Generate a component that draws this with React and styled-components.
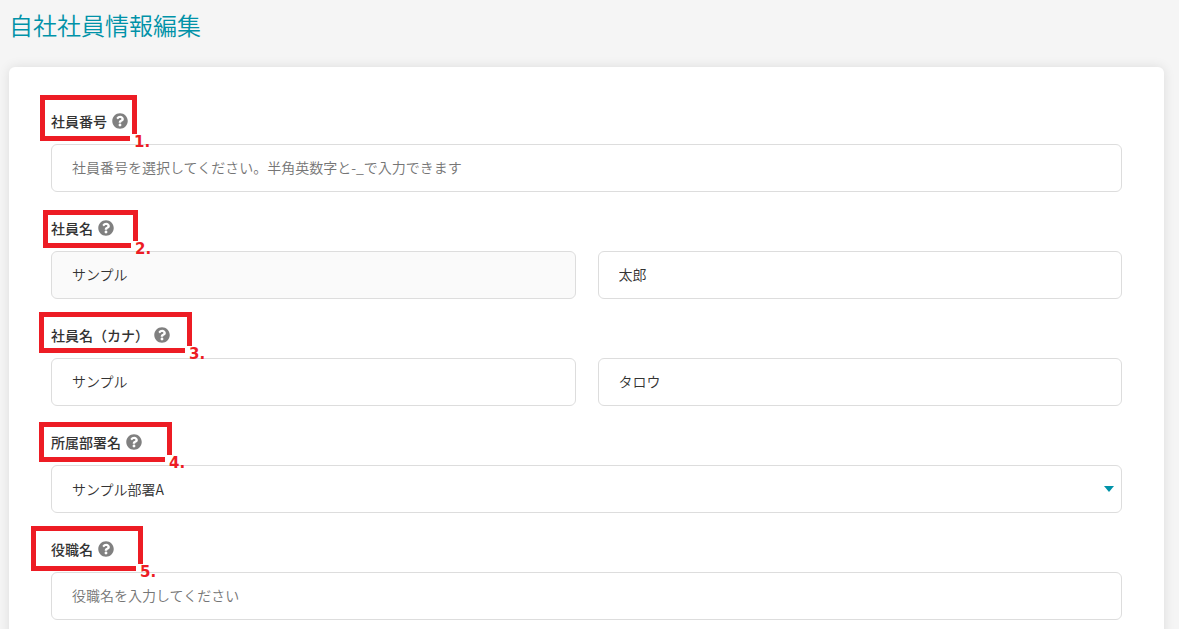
import React from "react";
import styled, { createGlobalStyle } from "styled-components";
import { FaQuestionCircle } from "react-icons/fa";

const GlobalStyle = createGlobalStyle`
  * {
    box-sizing: border-box;
  }
  html {
    scrollbar-width: none;
  }
  body {
    margin: 0;
    background-color: #f5f5f5;
    color: #333333;
    font-family: "Noto Sans CJK JP", sans-serif;
    font-size: 14px;
  }
`;

const Page = styled.main`
  padding: 7px 15px 0 9px;
`;
const PageTitle = styled.h1`
  margin: 0 0 24px;
  color: #0092a8;
  font-size: 24px;
  font-weight: 350;
  line-height: 36px;
`;
const Panel = styled.form`
  padding: 42px;
  background-color: #ffffff;
  border-radius: 6px;
  box-shadow: 0 0 12px rgba(0, 0, 0, 0.1);
  display: flex;
  flex-direction: column;
  gap: 24px;
`;
const FieldWrapper = styled.div`
  display: flex;
  flex-direction: column;
  gap: 11px;
`;
const LabelRow = styled.div`
  position: relative;
  height: 24px;
  display: flex;
  align-items: center;
  gap: 5px;
`;
const FieldLabel = styled.label`
  font-weight: 500;
  line-height: 24px;
`;
const HelpIcon = styled(FaQuestionCircle)`
  width: 16px;
  height: 16px;
  color: #808080;
`;
const Controls = styled.div`
  display: grid;
  grid-template-columns: repeat(${(props) => props.$columns}, 1fr);
  gap: 22px;
`;
const TextInput = styled.input`
  width: 100%;
  height: 48px;
  padding: 0 20px 3px;
  background-color: ${(props) => (props.$shaded ? "#fafafa" : "#ffffff")};
  border: 1px solid #dddddd;
  border-radius: 6px;
  color: #333333;
  font-family: inherit;
  font-size: 14px;
  font-weight: 350;
  &::placeholder {
    color: #757575;
    opacity: 1;
  }
`;
const SelectWrapper = styled.div`
  position: relative;
`;
const Select = styled.select`
  width: 100%;
  height: 48px;
  padding: 0 20px;
  appearance: none;
  background-color: #ffffff;
  border: 1px solid #dddddd;
  border-radius: 6px;
  color: #333333;
  font-family: inherit;
  font-size: 14px;
  font-weight: 350;
`;
const SelectArrow = styled.svg`
  position: absolute;
  top: 21px;
  right: 8px;
  width: 10px;
  height: 6px;
  fill: #0092a8;
  pointer-events: none;
`;

// red frame around a label, its lower right corner is cut away for the number
const Callout = styled.div`
  position: absolute;
  z-index: 1;
  left: ${(props) => props.$left}px;
  top: ${(props) => props.$top}px;
  width: ${(props) => props.$width}px;
  height: ${(props) => props.$height}px;
  border: 5px solid #ed1c24;
  pointer-events: none;
  &::after {
    content: "";
    position: absolute;
    right: -5px;
    bottom: -5px;
    width: 7px;
    height: 7px;
    background-color: #ffffff;
  }
`;
const CalloutNumber = styled.span`
  position: absolute;
  z-index: 1;
  left: calc(100% + 2px);
  top: calc(100% - 2px);
  color: #ed1c24;
  font-family: "DejaVu Sans", sans-serif;
  font-size: 15px;
  font-weight: 700;
  line-height: 16px;
`;

const fields = [
  {
    id: "employeeNumber",
    label: "社員番号",
    callout: { left: -11, top: -14, width: 97, height: 46 },
    inputs: [
      {
        placeholder:
          "社員番号を選択してください。半角英数字と-_で入力できます",
      },
    ],
  },
  {
    id: "employeeName",
    label: "社員名",
    callout: { left: -8, top: -6, width: 95, height: 38 },
    inputs: [{ value: "サンプル", shaded: true }, { value: "太郎" }],
  },
  {
    id: "employeeKana",
    label: "社員名（カナ）",
    callout: { left: -12, top: -11, width: 153, height: 41 },
    inputs: [{ value: "サンプル" }, { value: "タロウ" }],
  },
  {
    id: "department",
    label: "所属部署名",
    callout: { left: -12, top: -8, width: 133, height: 40 },
    options: ["サンプル部署A"],
  },
  {
    id: "position",
    label: "役職名",
    callout: { left: -20, top: -11, width: 112, height: 45 },
    inputs: [{ placeholder: "役職名を入力してください" }],
  },
];

function Field({ field, number }) {
  const { id, label, callout, inputs, options } = field;

  return (
    <FieldWrapper>
      <LabelRow>
        <FieldLabel id={`${id}Label`} htmlFor={id}>
          {label}
        </FieldLabel>
        <HelpIcon aria-hidden="true" />
        <Callout
          $left={callout.left}
          $top={callout.top}
          $width={callout.width}
          $height={callout.height}
        >
          <CalloutNumber>{number}.</CalloutNumber>
        </Callout>
      </LabelRow>
      {options ? (
        <SelectWrapper>
          <Select id={id} name={id}>
            {options.map((option) => (
              <option key={option}>{option}</option>
            ))}
          </Select>
          <SelectArrow viewBox="0 0 10 6" aria-hidden="true">
            <path d="M0 0h10L5 6z" />
          </SelectArrow>
        </SelectWrapper>
      ) : (
        <Controls $columns={inputs.length}>
          {inputs.map((input, i) => (
            <TextInput
              key={`${id}${i}`}
              id={i === 0 ? id : `${id}${i}`}
              aria-labelledby={`${id}Label`}
              type="text"
              defaultValue={input.value}
              placeholder={input.placeholder}
              $shaded={input.shaded}
            />
          ))}
        </Controls>
      )}
    </FieldWrapper>
  );
}

function App() {
  return (
    <>
      <GlobalStyle />
      <Page>
        <PageTitle>自社社員情報編集</PageTitle>
        <Panel>
          {fields.map((field, i) => (
            <Field key={field.id} field={field} number={i + 1} />
          ))}
        </Panel>
      </Page>
    </>
  );
}

export default App;
